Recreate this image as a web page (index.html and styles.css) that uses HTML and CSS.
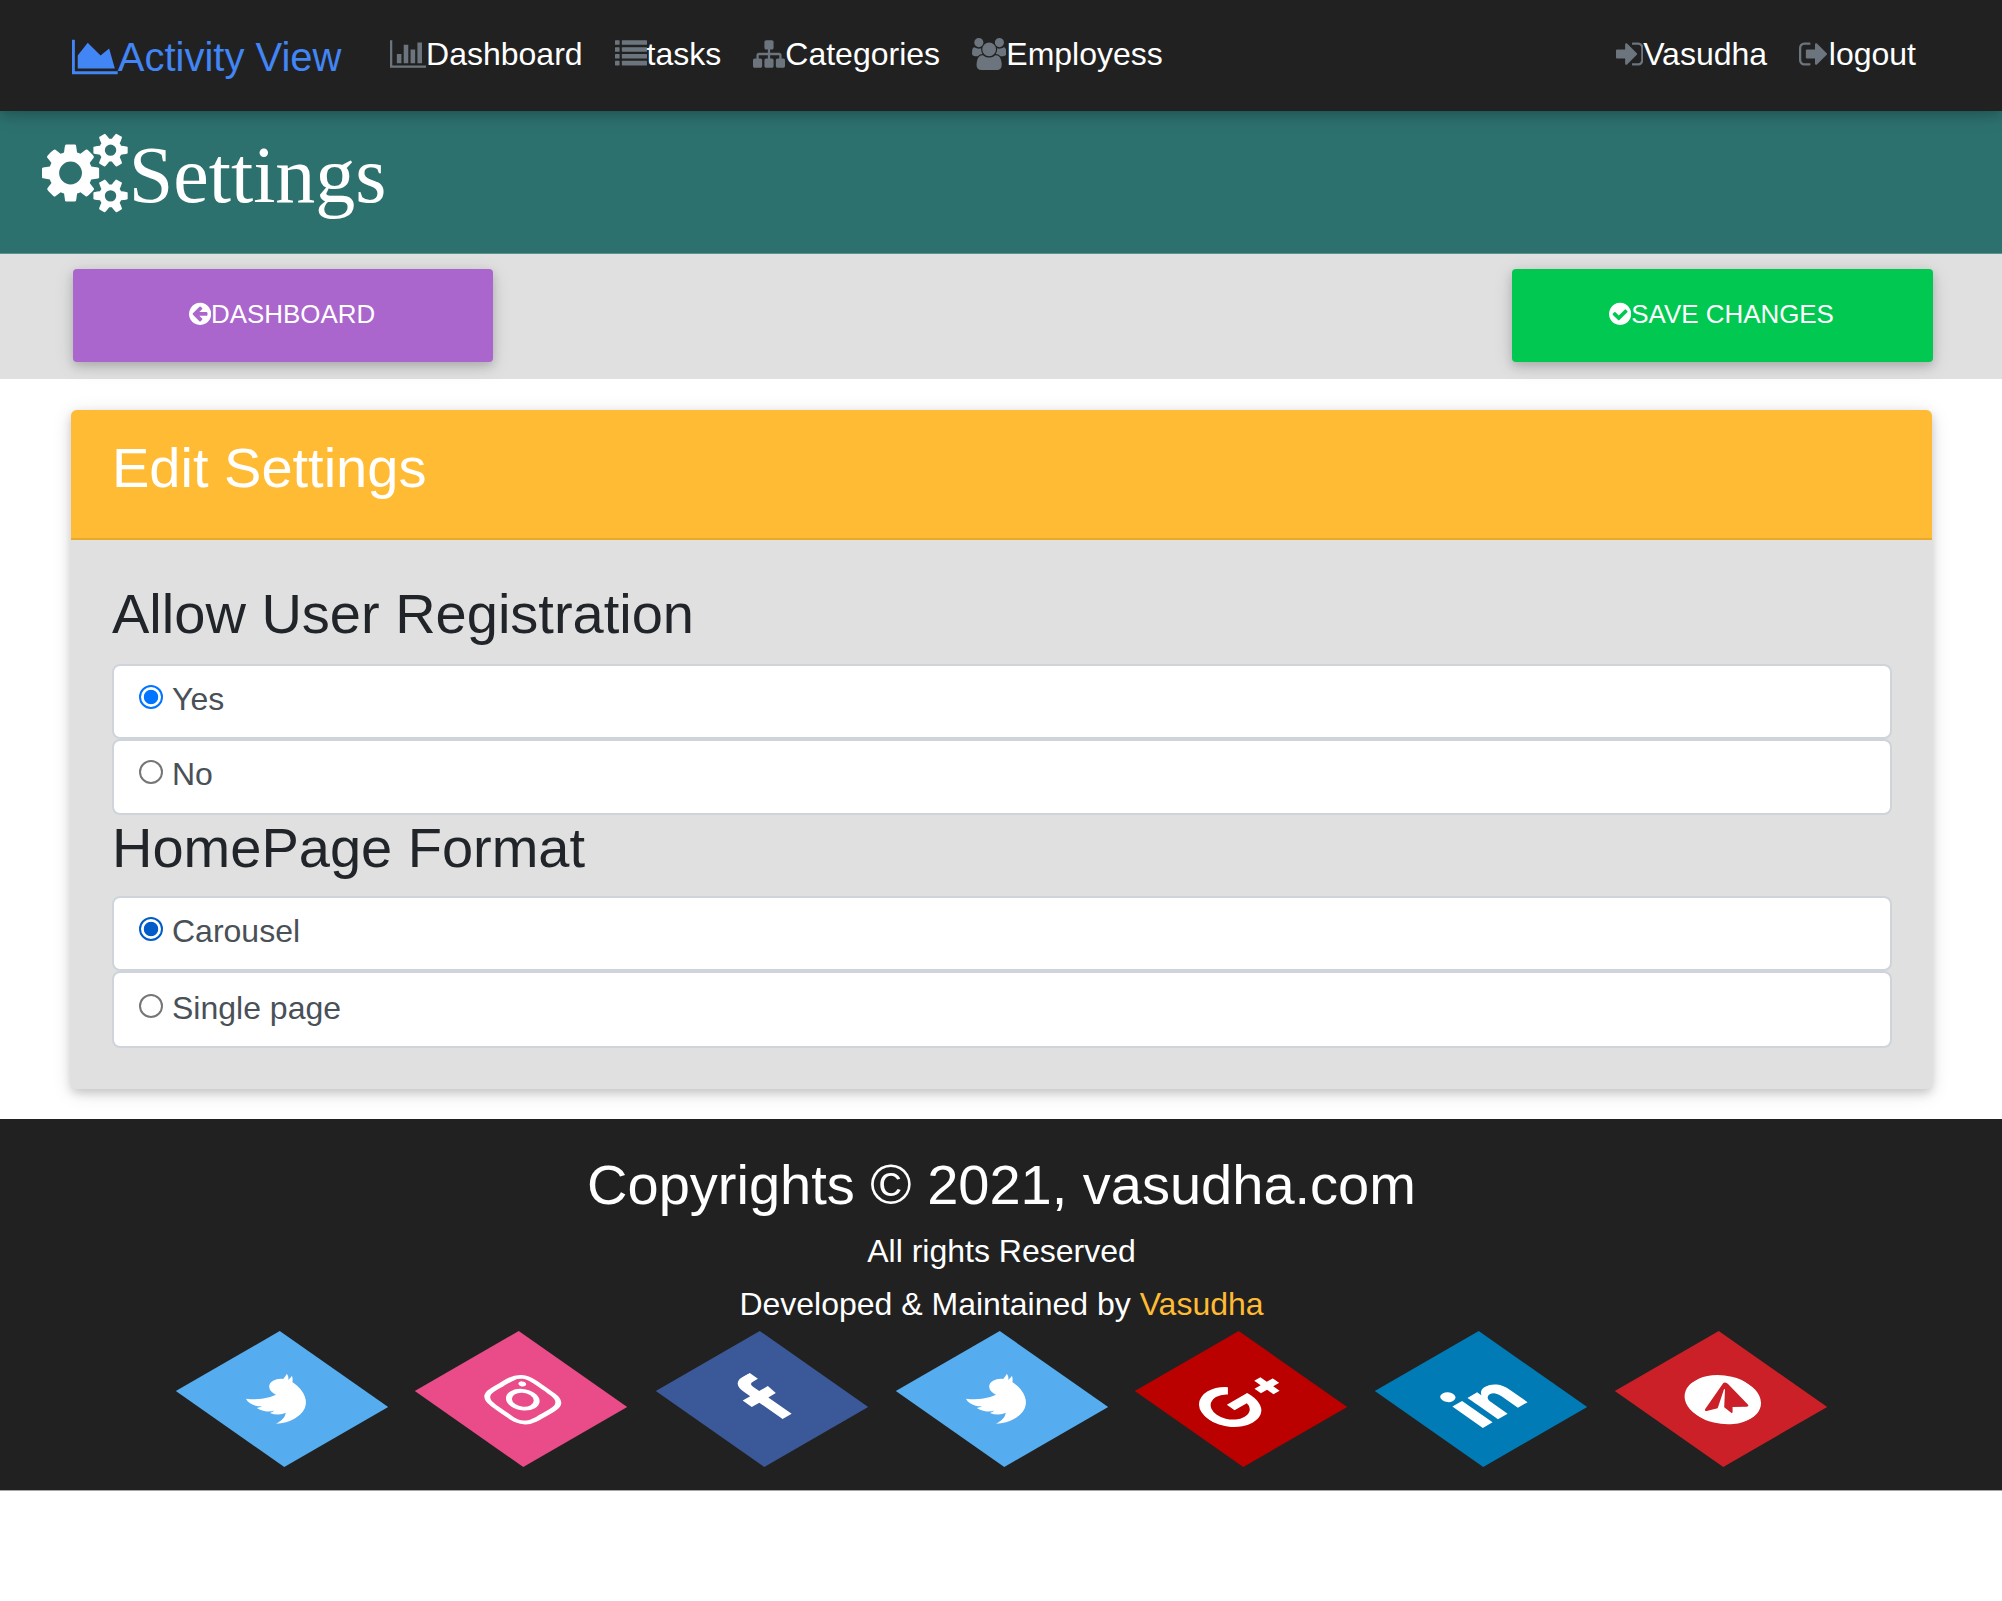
FILE: index.html
```html
<!DOCTYPE html>
<html lang="en">
<head>
<meta charset="utf-8">
<title>Settings</title>
<link rel="stylesheet" href="styles.css">
</head>
<body>
<nav class="navbar">
  <a class="brand"><svg class="icon" style="width:1.143em" viewBox="0 0 2048 1792"><path d="M2048 1536v128h-2048v-1536h128v1408h1920zm-384-1024l256 896h-1664v-576l448-576 576 576z"/></svg>Activity View</a>
  <div class="links">
    <a class="link"><svg class="icon" style="width:1.143em" viewBox="0 0 2048 1792"><path d="M640 896v512h-256v-512h256zm384-512v1024h-256v-1024h256zm1024 1152v128h-2048v-1536h128v1408h1920zm-640-896v768h-256v-768h256zm384-384v1152h-256v-1152h256z"/></svg>Dashboard</a>
    <a class="link"><svg class="icon" viewBox="0 0 1792 1792"><rect x="0" y="128" width="256" height="256" rx="32"/><rect x="384" y="128" width="1408" height="256" rx="32"/><rect x="0" y="512" width="256" height="256" rx="32"/><rect x="384" y="512" width="1408" height="256" rx="32"/><rect x="0" y="896" width="256" height="256" rx="32"/><rect x="384" y="896" width="1408" height="256" rx="32"/><rect x="0" y="1280" width="256" height="256" rx="32"/><rect x="384" y="1280" width="1408" height="256" rx="32"/></svg>tasks</a>
    <a class="link"><svg class="icon" viewBox="0 0 1792 1792"><path d="M1792 1248v320q0 40-28 68t-68 28h-320q-40 0-68-28t-28-68v-320q0-40 28-68t68-28h96v-192h-512v192h96q40 0 68 28t28 68v320q0 40-28 68t-68 28h-320q-40 0-68-28t-28-68v-320q0-40 28-68t68-28h96v-192h-512v192h96q40 0 68 28t28 68v320q0 40-28 68t-68 28h-320q-40 0-68-28t-28-68v-320q0-40 28-68t68-28h96v-192q0-52 38-90t90-38h512v-192h-96q-40 0-68-28t-28-68v-320q0-40 28-68t68-28h320q40 0 68 28t28 68v320q0 40-28 68t-68 28h-96v192h512q52 0 90 38t38 90v192h96q40 0 68 28t28 68z"/></svg>Categories</a>
    <a class="link"><svg class="icon" style="width:1.071em" viewBox="0 0 1920 1792"><path d="M593 896q-162 5-265 128h-134q-82 0-138-40.5t-56-118.5q0-353 124-353 6 0 43.5 21t97.5 42.5 119 21.5q67 0 133-23-5 37-5 66 0 139 81 256zm1071 637q0 120-73 189.5t-194 69.5h-874q-121 0-194-69.5t-73-189.5q0-53 3.5-103.5t14-109 26.5-108.5 43-97.5 62-81 85.5-53.5 111.5-20q10 0 43 21.5t73 48 107 48 135 21.5 135-21.5 107-48 73-48 43-21.5q61 0 111.5 20t85.5 53.5 62 81 43 97.5 26.5 108.5 14 109 3.5 103.5zm-1024-1277q0 106-75 181t-181 75-181-75-75-181 75-181 181-75 181 75 75 181zm704 384q0 159-112.5 271.5t-271.5 112.5-271.5-112.5-112.5-271.5 112.5-271.5 271.5-112.5 271.5 112.5 112.5 271.5zm576 225q0 78-56 118.5t-138 40.5h-134q-103-123-265-128 81-117 81-256 0-29-5-66 66 23 133 23 59 0 119-21.5t97.5-42.5 43.5-21q124 0 124 353zm-128-609q0 106-75 181t-181 75-181-75-75-181 75-181 181-75 181 75 75 181z"/></svg>Employess</a>
  </div>
  <div class="links links-end">
    <a class="link"><svg class="icon" style="width:.857em" viewBox="128 0 1536 1792"><path d="M1312 896q0 26-19 45l-544 544q-19 19-45 19t-45-19-19-45v-288h-448q-26 0-45-19t-19-45v-384q0-26 19-45t45-19h448v-288q0-26 19-45t45-19 45 19l544 544q19 19 19 45zm352-352v704q0 119-84.5 203.5t-203.5 84.5h-320q-13 0-22.5-9.5t-9.5-22.5q0-4-1-20t-.5-26.5 3-23.5 10-19.5 20.5-6.5h320q66 0 113-47t47-113v-704q0-66-47-113t-113-47h-312l-11.5-1-11.5-3-8-5.5-7-9-2-13.5q0-4-1-20t-.5-26.5 3-23.5 10-19.5 20.5-6.5h320q119 0 203.5 84.5t84.5 203.5z"/></svg>Vasudha</a>
    <a class="link"><svg class="icon" style="width:.929em" viewBox="64 0 1664 1792"><path d="M704 1440q0 4 1 20t.5 26.5-3 23.5-10 19.5-20.5 6.5h-320q-119 0-203.5-84.5t-84.5-203.5v-704q0-119 84.5-203.5t203.5-84.5h320q13 0 22.5 9.5t9.5 22.5q0 4 1 20t.5 26.5-3 23.5-10 19.5-20.5 6.5h-320q-66 0-113 47t-47 113v704q0 66 47 113t113 47h312l11.5 1 11.5 3 8 5.5 7 9 2 13.5zm928-544q0 26-19 45l-544 544q-19 19-45 19t-45-19-19-45v-288h-448q-26 0-45-19t-19-45v-384q0-26 19-45t45-19h448v-288q0-26 19-45t45-19 45 19l544 544q19 19 19 45z"/></svg>logout</a>
  </div>
</nav>

<header class="page-head">
  <h1><svg class="icon" style="width:1.071em" viewBox="0 0 1920 1792"><path d="M896 896q0-106-75-181t-181-75-181 75-75 181 75 181 181 75 181-75 75-181zm768 512q0-52-38-90t-90-38-90 38-38 90q0 53 37.5 90.5t90.5 37.5 90.5-37.5 37.5-90.5zm0-1024q0-52-38-90t-90-38-90 38-38 90q0 53 37.5 90.5t90.5 37.5 90.5-37.5 37.5-90.5zm-384 421v185q0 10-7 19.5t-16 10.5l-155 24q-11 35-32 76 34 48 90 115 7 11 7 20 0 12-7 19-23 30-82.5 89.5t-78.5 59.5q-11 0-21-7l-115-90q-37 19-77 31-11 108-23 155-7 24-30 24h-186q-11 0-20-7.5t-10-17.5l-23-153q-34-10-75-31l-118 89q-7 7-20 7-11 0-21-8-144-133-144-160 0-9 7-19 10-14 41-53t47-61q-23-44-35-82l-152-24q-10-1-17-9.5t-7-19.5v-185q0-10 7-19.5t16-10.5l155-24q11-35 32-76-34-48-90-115-7-11-7-20 0-12 7-20 22-30 82-89t79-59q11 0 21 7l115 90q34-18 77-32 11-108 23-154 7-24 30-24h186q11 0 20 7.5t10 17.5l23 153q34 10 75 31l118-89q8-7 20-7 11 0 21 8 144 133 144 160 0 8-7 19-12 16-42 54t-45 60q23 48 34 82l152 23q10 2 17 10.5t7 19.5zm640 533v140q0 16-149 31-12 27-30 52 51 113 51 138 0 4-4 7-122 71-124 71-8 0-46-47t-52-68q-20 2-30 2t-30-2q-14 21-52 68t-46 47q-2 0-124-71-4-3-4-7 0-25 51-138-18-25-30-52-149-15-149-31v-140q0-16 149-31 13-29 30-52-51-113-51-138 0-4 4-7 4-2 35-20t59-34 30-16q8 0 46 46.5t52 67.5q20-2 30-2t30 2q51-71 92-112l6-2q4 0 124 70 4 3 4 7 0 25-51 138 17 23 30 52 149 15 149 31zm0-1024v140q0 16-149 31-12 27-30 52 51 113 51 138 0 4-4 7-122 71-124 71-8 0-46-47t-52-68q-20 2-30 2t-30-2q-14 21-52 68t-46 47q-2 0-124-71-4-3-4-7 0-25 51-138-18-25-30-52-149-15-149-31v-140q0-16 149-31 13-29 30-52-51-113-51-138 0-4 4-7 4-2 35-20t59-34 30-16q8 0 46 46.5t52 67.5q20-2 30-2t30 2q51-71 92-112l6-2q4 0 124 70 4 3 4 7 0 25-51 138 17 23 30 52 149 15 149 31z"/></svg>Settings</h1>
</header>

<section class="actions">
  <a class="btn btn-purple"><svg class="icon" style="width:.857em" viewBox="128 0 1536 1792"><path d="M1408 960v-128q0-26-19-45t-45-19h-502l189-189q19-19 19-45t-19-45l-91-91q-18-18-45-18t-45 18l-362 362-91 91q-18 18-18 45t18 45l91 91 362 362q18 18 45 18t45-18l91-91q18-18 18-45t-18-45l-189-189h502q26 0 45-19t19-45zm256-64q0 209-103 385.5t-279.5 279.5-385.5 103-385.5-103-279.5-279.5-103-385.5 103-385.5 279.5-279.5 385.5-103 385.5 103 279.5 279.5 103 385.5z"/></svg>DASHBOARD</a>
  <a class="btn btn-green"><svg class="icon" style="width:.857em" viewBox="128 0 1536 1792"><path d="M1412 734q0-28-18-46l-91-90q-19-19-45-19t-45 19l-408 407-226-226q-19-19-45-19t-45 19l-91 90q-18 18-18 46 0 27 18 45l362 362q19 19 45 19 27 0 46-19l543-543q18-18 18-45zm252 162q0 209-103 385.5t-279.5 279.5-385.5 103-385.5-103-279.5-279.5-103-385.5 103-385.5 279.5-279.5 385.5-103 385.5 103 279.5 279.5 103 385.5z"/></svg>SAVE CHANGES</a>
</section>

<main class="card">
  <div class="card-head"><h3>Edit Settings</h3></div>
  <div class="card-body">
    <h3>Allow User Registration</h3>
    <label class="option"><input type="radio" name="reg" checked>Yes</label>
    <label class="option option-last"><input type="radio" name="reg">No</label>
    <h3 class="second">HomePage Format</h3>
    <label class="option"><input class="active" type="radio" name="home" checked>Carousel</label>
    <label class="option option-last option-low"><input type="radio" name="home">Single page</label>
  </div>
</main>

<footer class="footer">
  <h3>Copyrights © 2021, vasudha.com</h3>
  <p>All rights Reserved</p>
  <p>Developed &amp; Maintained by <span class="author">Vasudha</span></p>
  <div class="social">
    <a class="tile twitter"><svg viewBox="0 0 1792 1792"><path d="M1684 408q-67 98-162 167 1 14 1 42 0 130-38 259.5t-115.5 248.5-184.5 210.5-258 146-323 54.5q-271 0-496-145 35 4 78 4 225 0 401-138-105-2-188-64.5t-114-159.5q33 5 61 5 43 0 85-11-112-23-185.5-111.5t-73.5-205.5v-4q68 38 146 41-66-44-105-115t-39-154q0-88 44-163 121 149 294.5 238.5t371.5 99.5q-8-38-8-74 0-134 94.5-228.5t228.5-94.5q140 0 236 102 109-21 205-78-37 115-142 178 93-10 186-50z"/></svg></a>
    <a class="tile instagram"><svg viewBox="0 0 1792 1792"><path d="M1152 896q0-106-75-181t-181-75-181 75-75 181 75 181 181 75 181-75 75-181zm138 0q0 164-115 279t-279 115-279-115-115-279 115-279 279-115 279 115 115 279zm108-410q0 38-27 65t-65 27-65-27-27-65 27-65 65-27 65 27 27 65zm-502-220q-7 0-76.5-.5t-105.5 0-96.5 3-103 10-71.5 18.5q-50 20-88 58t-58 88q-11 29-18.5 71.5t-10 103-3 96.5 0 105.5.5 76.5-.5 76.5 0 105.5 3 96.5 10 103 18.5 71.5q20 50 58 88t88 58q29 11 71.5 18.5t103 10 96.5 3 105.5 0 76.5-.5 76.5.5 105.5 0 96.5-3 103-10 71.5-18.5q50-20 88-58t58-88q11-29 18.5-71.5t10-103 3-96.5 0-105.5-.5-76.5.5-76.5 0-105.5-3-96.5-10-103-18.5-71.5q-20-50-58-88t-88-58q-29-11-71.5-18.5t-103-10-96.5-3-105.5 0-76.5.5zm768 630q0 229-5 317-10 208-124 322t-322 124q-88 5-317 5t-317-5q-208-10-322-124t-124-322q-5-88-5-317t5-317q10-208 124-322t322-124q88-5 317-5t317 5q208 10 322 124t124 322q5 88 5 317z"/></svg></a>
    <a class="tile facebook"><svg viewBox="0 0 1792 1792"><path d="M1343 12v264h-157q-86 0-116 36t-30 108v189h293l-39 296h-254v759h-306v-759h-255v-296h255v-218q0-186 104-288.5t277-102.5q147 0 228 12z"/></svg></a>
    <a class="tile twitter"><svg viewBox="0 0 1792 1792"><path d="M1684 408q-67 98-162 167 1 14 1 42 0 130-38 259.5t-115.5 248.5-184.5 210.5-258 146-323 54.5q-271 0-496-145 35 4 78 4 225 0 401-138-105-2-188-64.5t-114-159.5q33 5 61 5 43 0 85-11-112-23-185.5-111.5t-73.5-205.5v-4q68 38 146 41-66-44-105-115t-39-154q0-88 44-163 121 149 294.5 238.5t371.5 99.5q-8-38-8-74 0-134 94.5-228.5t228.5-94.5q140 0 236 102 109-21 205-78-37 115-142 178 93-10 186-50z"/></svg></a>
    <a class="tile google"><svg class="wide" viewBox="0 0 2304 1792"><path d="M1437 913q0 208-87 370.5t-248 254-369 91.5q-149 0-285-58t-234-156-156-234-58-285 58-285 156-234 234-156 285-58q286 0 491 192l-199 191q-117-113-292-113-123 0-227.5 62t-165.5 168.5-61 232.5 61 232.5 165.5 168.5 227.5 62q83 0 152.5-23t114.5-57.5 78.5-78.5 49-83 21.5-74h-416v-252h692q12 63 12 122zm867-122v210h-209v209h-210v-209h-209v-210h209v-209h210v209h209z"/></svg></a>
    <a class="tile linkedin"><svg viewBox="0 0 1792 1792"><path d="M477 625v991h-330v-991h330zm21-306q1 73-50.5 122t-135.5 49h-2q-82 0-132-49t-50-122q0-74 51.5-122.5t134.5-48.5 133 48.5 51 122.5zm1166 729v568h-329v-530q0-105-40.5-164.5t-126.5-59.5q-63 0-105.5 34.5t-63.5 85.5q-11 30-11 81v553h-329q2-399 2-647t-1-296l-1-48h329v144h-2q20-32 41-56t56.5-52 87-43.5 114.5-15.5q171 0 275 113.5t104 332.5z"/></svg></a>
    <a class="tile telegram"><svg viewBox="128 128 1536 1536"><path d="M1189 1307l147-693q9-44-10.5-63t-51.5-7l-864 333q-29 11-39.5 25t-2.5 26.5 32 19.5l221 69 513-323q21-14 32-6 7 5-4 15l-415 375-16 228q23 0 45-22l108-104 224 165q64 36 81-38zm475-411q0 209-103 385.5t-279.5 279.5-385.5 103-385.5-103-279.5-279.5-103-385.5 103-385.5 279.5-279.5 385.5-103 385.5 103 279.5 279.5 103 385.5z"/></svg></a>
  </div>
</footer>
</body>
</html>
```
FILE: styles.css
```css
* { box-sizing: border-box; }
body {
  margin: 0;
  background: #fff;
  color: #212529;
  font: 32px/48px "Liberation Sans", Arial, sans-serif;
}
h1, h3, p { margin: 0; font-weight: 400; }
h3 { font-size: 56px; line-height: 67px; }
svg { fill: currentColor; }
.icon { width: 1em; height: 1em; vertical-align: -.143em; }

.navbar {
  position: relative;
  display: flex;
  align-items: flex-start;
  height: 111px;
  padding: 27px 70px 0 72px;
  background: #212121;
  box-shadow: 0 4px 10px rgba(0, 0, 0, .16), 0 4px 20px rgba(0, 0, 0, .12);
}
.brand {
  margin-right: 32px;
  color: #4285f4;
  font-size: 40px;
  line-height: 60px;
}
.links { display: flex; padding-top: 3px; }
.links-end { margin-left: auto; }
.link { padding: 0 16px; color: #fff; }
.link .icon { color: #6c757d; }
.brand, .link, .btn, h1 { white-space: nowrap; }

.page-head {
  height: 143px;
  padding: 16px 42px 0;
  background: #2d716f;
  border-bottom: 1px solid #5d9492;
  color: #fff;
}
.page-head h1 {
  font: 80px/96px "Liberation Serif", "Times New Roman", serif;
}
.page-head .icon { margin-right: 1px; }

.actions {
  display: flex;
  justify-content: space-between;
  height: 125px;
  padding: 15px 69px 0 73px;
  background: #e0e0e0;
}
.btn {
  width: 420px;
  height: 93px;
  padding: 26px 2px 0 0;
  border-radius: 4px;
  color: #fff;
  font-size: 25.92px;
  line-height: 39px;
  text-align: center;
  box-shadow: 0 4px 10px rgba(0, 0, 0, .16), 0 4px 20px rgba(0, 0, 0, .12);
}
.btn-purple { background: #a6c; }
.btn-green { width: 421px; background: #00c851; }

.card {
  margin: 31px 70px 0 71px;
  height: 679px;
  border-radius: 6px;
  background: #e0e0e0;
  box-shadow: 0 4px 10px rgba(0, 0, 0, .16), 0 4px 20px rgba(0, 0, 0, .12);
}
.card-head {
  height: 130px;
  padding: 24px 41px;
  border-bottom: 2px solid #e8a92f;
  border-radius: 6px 6px 0 0;
  background: #fb3;
  color: #fff;
}
.card-body { padding: 40px 40px 0 41px; }
.card-body h3 { margin-bottom: 17px; }
.card-body h3.second { margin: -1px 0 15px; }

.option {
  display: flex;
  align-items: flex-start;
  height: 75px;
  padding: 9px 24px 0;
  border: 2px solid #ced4da;
  border-radius: 8px;
  background: #fff;
  color: #495057;
}
.option-last { height: 76px; }
.option-low { height: 77px; padding-top: 11px; }
.option input {
  appearance: none;
  width: 24px;
  height: 24px;
  margin: 10px 9px 0 1px;
  border: 2px solid #767676;
  border-radius: 50%;
}
.option input:checked {
  border-color: #0075ff;
  background: radial-gradient(circle, #0075ff 6.8px, #fff 7.6px);
}
.option input.active:checked {
  border-color: #005cc8;
  background: radial-gradient(circle, #005cc8 6.8px, #fff 7.6px);
}

.footer {
  height: 372px;
  margin-top: 30px;
  padding: 32px 0 0 1px;
  border-bottom: 1px solid #a6a6a6;
  background: #212121;
  color: #fff;
  text-align: center;
}
.footer h3 { margin-bottom: 9px; }
.footer p { margin-bottom: 5px; }
.author { color: #fb3; }

.social {
  display: flex;
  justify-content: center;
  gap: 119.7px;
  padding-top: 5.5px;
}
.tile {
  display: flex;
  align-items: center;
  justify-content: center;
  width: 120px;
  height: 120px;
  padding-top: 3px;
  color: #fff;
  transform: rotate(-30deg) skew(25deg);
}
.tile svg { flex: none; width: 61px; height: 61px; }
.tile svg.wide { width: 78px; }
.twitter { background: #55acee; }
.instagram { margin: 0 1px 0 -1px; background: #ea4c89; }
.facebook { background: #3b5998; }
.google { background: #b00; }
.linkedin { background: #007bb5; }
.telegram { background: #cb2027; }
```
